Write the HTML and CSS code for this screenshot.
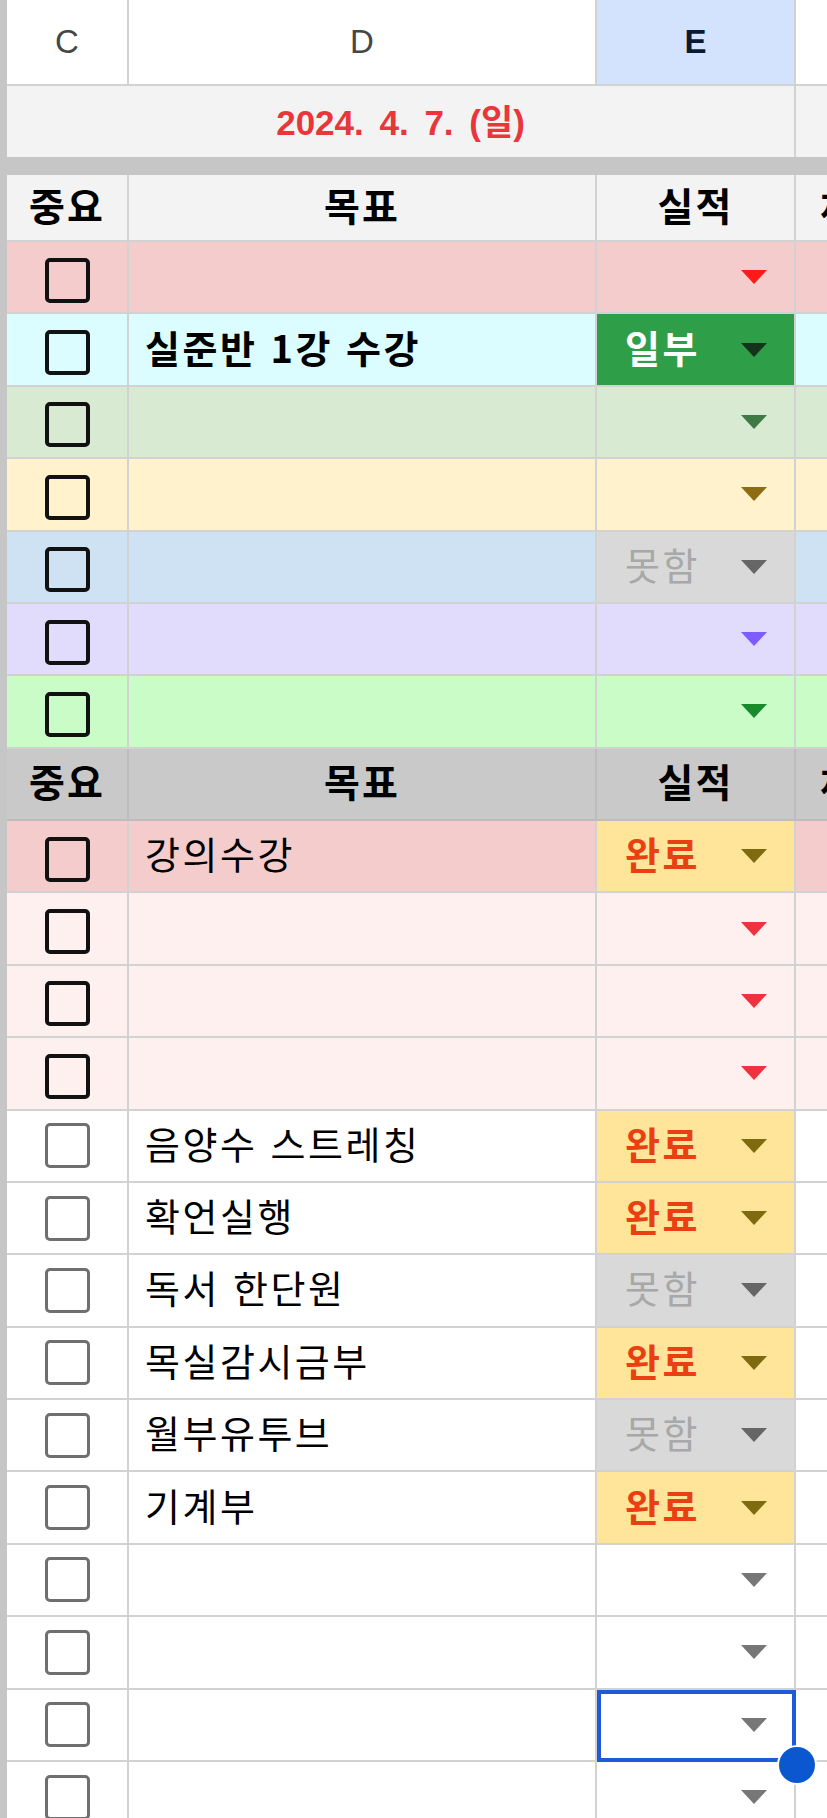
FILE: index.html
```html
<!DOCTYPE html>
<html lang="ko">
<head>
<meta charset="utf-8">
<title>Sheet</title>
<link rel="stylesheet" href="styles.css">
</head>
<body>
<div class="sheet">
  <div class="row colhead">
    <div class="strip"></div>
    <div class="cell center">C</div>
    <div class="cell center">D</div>
    <div class="cell center sel-col">E</div>
    <div class="cell"></div>
  </div>
  <div class="row daterow">
    <div class="strip"></div>
    <div class="cell center merged">2024. 4. 7. (일)</div>
    <div class="cell"></div>
  </div>
  <div class="separator"></div>
  <div class="row labels light">
    <div class="strip"></div>
    <div class="cell center">중요</div>
    <div class="cell center">목표</div>
    <div class="cell center">실적</div>
    <div class="cell fcol">체크</div>
  </div>

  <div class="row bg-red">
    <div class="strip"></div>
    <div class="cell center"><span class="cb"></span></div>
    <div class="cell text"></div>
    <div class="cell dd a-red"><span></span><i class="tri"></i></div>
    <div class="cell"></div>
  </div>
  <div class="row bg-cyan">
    <div class="strip"></div>
    <div class="cell center"><span class="cb"></span></div>
    <div class="cell text bold">실준반 1강 수강</div>
    <div class="cell dd chip-green"><span>일부</span><i class="tri"></i></div>
    <div class="cell"></div>
  </div>
  <div class="row bg-green">
    <div class="strip"></div>
    <div class="cell center"><span class="cb"></span></div>
    <div class="cell text"></div>
    <div class="cell dd a-green"><span></span><i class="tri"></i></div>
    <div class="cell"></div>
  </div>
  <div class="row bg-yellow">
    <div class="strip"></div>
    <div class="cell center"><span class="cb"></span></div>
    <div class="cell text"></div>
    <div class="cell dd a-olive"><span></span><i class="tri"></i></div>
    <div class="cell"></div>
  </div>
  <div class="row bg-blue">
    <div class="strip"></div>
    <div class="cell center"><span class="cb"></span></div>
    <div class="cell text"></div>
    <div class="cell dd chip-fail"><span>못함</span><i class="tri"></i></div>
    <div class="cell"></div>
  </div>
  <div class="row bg-purple">
    <div class="strip"></div>
    <div class="cell center"><span class="cb"></span></div>
    <div class="cell text"></div>
    <div class="cell dd a-purple"><span></span><i class="tri"></i></div>
    <div class="cell"></div>
  </div>
  <div class="row bg-lime">
    <div class="strip"></div>
    <div class="cell center"><span class="cb"></span></div>
    <div class="cell text"></div>
    <div class="cell dd a-lime"><span></span><i class="tri"></i></div>
    <div class="cell"></div>
  </div>

  <div class="row labels dark">
    <div class="strip"></div>
    <div class="cell center">중요</div>
    <div class="cell center">목표</div>
    <div class="cell center">실적</div>
    <div class="cell fcol">체크</div>
  </div>

  <div class="row bg-red">
    <div class="strip"></div>
    <div class="cell center"><span class="cb"></span></div>
    <div class="cell text">강의수강</div>
    <div class="cell dd chip-done"><span>완료</span><i class="tri"></i></div>
    <div class="cell"></div>
  </div>
  <div class="row bg-pink">
    <div class="strip"></div>
    <div class="cell center"><span class="cb"></span></div>
    <div class="cell text"></div>
    <div class="cell dd a-pink"><span></span><i class="tri"></i></div>
    <div class="cell"></div>
  </div>
  <div class="row bg-pink">
    <div class="strip"></div>
    <div class="cell center"><span class="cb"></span></div>
    <div class="cell text"></div>
    <div class="cell dd a-pink"><span></span><i class="tri"></i></div>
    <div class="cell"></div>
  </div>
  <div class="row bg-pink">
    <div class="strip"></div>
    <div class="cell center"><span class="cb"></span></div>
    <div class="cell text"></div>
    <div class="cell dd a-pink"><span></span><i class="tri"></i></div>
    <div class="cell"></div>
  </div>

  <div class="row plain">
    <div class="strip"></div>
    <div class="cell center"><span class="cb gray"></span></div>
    <div class="cell text">음양수 스트레칭</div>
    <div class="cell dd chip-done"><span>완료</span><i class="tri"></i></div>
    <div class="cell"></div>
  </div>
  <div class="row plain">
    <div class="strip"></div>
    <div class="cell center"><span class="cb gray"></span></div>
    <div class="cell text">확언실행</div>
    <div class="cell dd chip-done"><span>완료</span><i class="tri"></i></div>
    <div class="cell"></div>
  </div>
  <div class="row plain">
    <div class="strip"></div>
    <div class="cell center"><span class="cb gray"></span></div>
    <div class="cell text">독서 한단원</div>
    <div class="cell dd chip-fail"><span>못함</span><i class="tri"></i></div>
    <div class="cell"></div>
  </div>
  <div class="row plain">
    <div class="strip"></div>
    <div class="cell center"><span class="cb gray"></span></div>
    <div class="cell text">목실감시금부</div>
    <div class="cell dd chip-done"><span>완료</span><i class="tri"></i></div>
    <div class="cell"></div>
  </div>
  <div class="row plain">
    <div class="strip"></div>
    <div class="cell center"><span class="cb gray"></span></div>
    <div class="cell text">월부유투브</div>
    <div class="cell dd chip-fail"><span>못함</span><i class="tri"></i></div>
    <div class="cell"></div>
  </div>
  <div class="row plain">
    <div class="strip"></div>
    <div class="cell center"><span class="cb gray"></span></div>
    <div class="cell text">기계부</div>
    <div class="cell dd chip-done"><span>완료</span><i class="tri"></i></div>
    <div class="cell"></div>
  </div>
  <div class="row plain">
    <div class="strip"></div>
    <div class="cell center"><span class="cb gray"></span></div>
    <div class="cell text"></div>
    <div class="cell dd a-gray"><span></span><i class="tri"></i></div>
    <div class="cell"></div>
  </div>
  <div class="row plain">
    <div class="strip"></div>
    <div class="cell center"><span class="cb gray"></span></div>
    <div class="cell text"></div>
    <div class="cell dd a-gray"><span></span><i class="tri"></i></div>
    <div class="cell"></div>
  </div>
  <div class="row plain">
    <div class="strip"></div>
    <div class="cell center"><span class="cb gray"></span></div>
    <div class="cell text"></div>
    <div class="cell dd a-gray selected"><span></span><i class="tri"></i><div class="sel-box"></div><div class="sel-dot"></div></div>
    <div class="cell"></div>
  </div>
  <div class="row plain">
    <div class="strip"></div>
    <div class="cell center"><span class="cb gray"></span></div>
    <div class="cell text"></div>
    <div class="cell dd a-gray"><span></span><i class="tri"></i></div>
    <div class="cell"></div>
  </div>
</div>
</body>
</html>
```

FILE: styles.css
```css
html, body {
  margin: 0;
  padding: 0;
  overflow: hidden;
  background: #ffffff;
}

body {
  width: 827px;
  height: 1818px;
  font-family: "Liberation Sans", "Noto Sans CJK KR", sans-serif;
  color: #000;
}

.sheet {
  width: 926px;
}

.row {
  display: grid;
  grid-template-columns: 7px 122px 468px 199px 130px;
  height: 72.38px;
}

.strip {
  background: #c6c6c6;
}

.cell {
  box-sizing: border-box;
  border-right: 2px solid #d2d2d2;
  border-bottom: 2px solid #d2d2d2;
  display: flex;
  align-items: center;
  min-width: 0;
  overflow: visible;
  white-space: nowrap;
}

.center {
  justify-content: center;
}

/* column letters */
.colhead {
  height: 86px;
  background: #fff;
}
.colhead .cell {
  font-size: 33px;
  color: #444746;
}
.colhead .sel-col {
  background: #d3e3fd;
  color: #0b1a33;
  font-weight: bold;
}

/* date row */
.daterow {
  height: 71px;
  background: #f3f3f3;
}
.daterow .cell {
  border-bottom: none;
}
.merged {
  grid-column: 2 / 5;
  color: #e8363a;
  font-weight: bold;
  font-size: 35px;
  word-spacing: 6px;
  padding-bottom: 4px;
}

.separator {
  height: 18px;
  background: #c6c6c6;
}

/* label rows */
.labels .cell {
  font-family: "Noto Sans CJK KR", sans-serif;
  font-weight: bold;
  font-size: 39px;
  letter-spacing: 2px;
  line-height: 1;
  padding-bottom: 6px;
}
.labels.light {
  height: 67px;
  background: #f3f3f3;
}
.labels.dark {
  background: #c9c9c9;
}
.labels.dark .cell {
  border-color: #bdbdbd;
}
.fcol {
  padding-left: 24px;
}

/* row colours */
.bg-red { background: #f4cccc; }
.bg-cyan { background: #dcfdff; }
.bg-green { background: #d9ead3; }
.bg-yellow { background: #fff2cc; }
.bg-blue { background: #cfe2f3; }
.bg-purple { background: #e1dcfb; }
.bg-lime { background: #c9fcc6; }
.bg-pink { background: #fff0f0; }
.plain { background: #ffffff; }

/* checkbox */
.cb {
  box-sizing: border-box;
  width: 45px;
  height: 45px;
  margin-top: 6px;
  border: 4px solid #111;
  border-radius: 5px;
}
.cb.gray {
  margin-top: 0;
  border: 3px solid #6f6f6f;
}

/* text cells */
.text {
  padding-left: 16px;
  font-family: "Noto Sans CJK KR", sans-serif;
  font-size: 38px;
  letter-spacing: 2.5px;
  line-height: 1;
  padding-bottom: 6px;
}
.text.bold {
  font-weight: bold;
}

/* dropdown cells */
.dd {
  justify-content: space-between;
  padding: 0 27px 0 28px;
  position: relative;
  font-family: "Noto Sans CJK KR", sans-serif;
  font-size: 38px;
  letter-spacing: 2.5px;
  line-height: 1;
}
.dd span {
  padding-bottom: 6px;
}
.tri {
  display: block;
  width: 0;
  height: 0;
  border-left: 13px solid transparent;
  border-right: 13px solid transparent;
  border-top: 14px solid currentColor;
}

.a-red { color: #ff1a1a; }
.a-green { color: #3f7a46; }
.a-olive { color: #8d6c12; }
.a-purple { color: #7c5cff; }
.a-lime { color: #188a2a; }
.a-pink { color: #f0323f; }
.a-gray { color: #777777; }

.chip-green {
  background: #2f9e48;
  color: #ffffff;
  font-weight: bold;
}
.chip-green .tri {
  color: #15331a;
}

.chip-done {
  background: #ffe599;
  color: #ea3f12;
  font-weight: bold;
}
.chip-done .tri {
  color: #7f6a0f;
}

.chip-fail {
  background: #d9d9d9;
  color: #a8a8a8;
}
.chip-fail .tri {
  color: #666666;
}

/* selection */
.sel-box {
  position: absolute;
  top: 0;
  left: 0;
  right: -2px;
  bottom: -2px;
  border: 4px solid #1f5bd8;
  pointer-events: none;
}
.sel-dot {
  position: absolute;
  right: -21px;
  bottom: -23px;
  width: 36px;
  height: 36px;
  border-radius: 50%;
  background: #0b57d0;
  box-shadow: 0 0 0 2px #ffffff;
  z-index: 2;
}
```
